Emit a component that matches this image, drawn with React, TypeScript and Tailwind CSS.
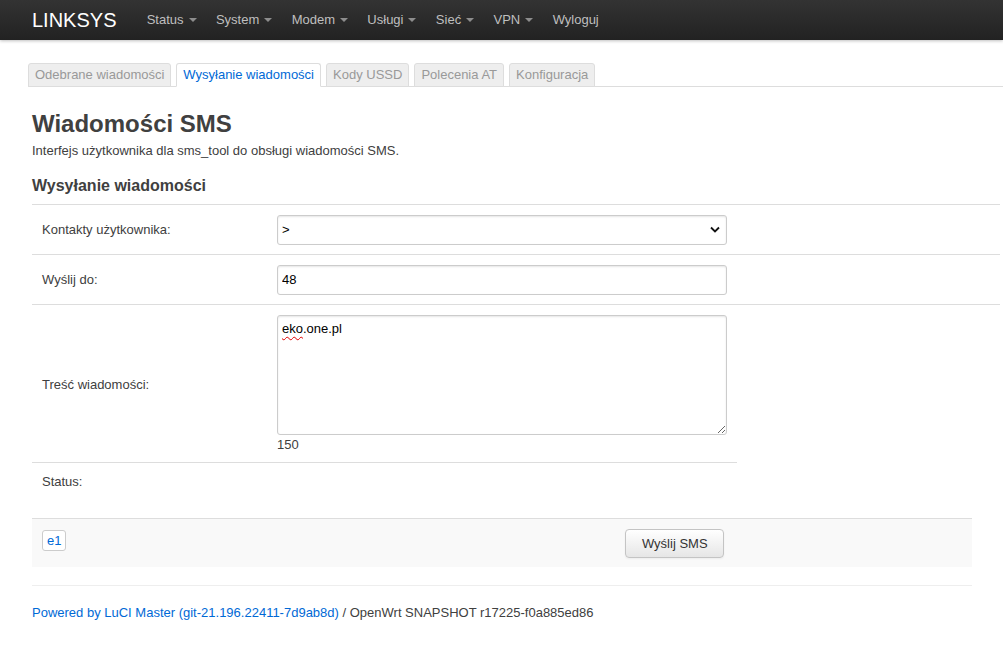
import { useState } from "react"

const menu = ["Status", "System", "Modem", "Usługi", "Sieć", "VPN"]
const tabs = ["Odebrane wiadomości", "Wysyłanie wiadomości", "Kody USSD", "Polecenia AT", "Konfiguracja"]

function Caret() {
  return (
    <span className="ml-[5px] inline-block h-0 w-0 border-x-[4px] border-t-[4px] border-x-transparent border-t-[#8d8d8d] align-middle" />
  )
}

export default function App() {
  const [number, setNumber] = useState("48")
  const [message, setMessage] = useState("eko.one.pl")

  return (
    <div className="min-h-[650px] bg-white text-[13px] leading-[18px] text-[#404040]" style={{ fontFamily: '"Liberation Sans", Arial, sans-serif' }}>
      {/* Top bar */}
      <div className="flex h-10 items-center bg-gradient-to-b from-[#333333] to-[#222222] px-8 shadow-[0_1px_3px_rgba(0,0,0,0.25)]">
        <span className="text-[20px] leading-10 text-white">LINKSYS</span>
        <nav className="ml-[20.5px] flex items-center">
          {menu.map((m) => (
            <a key={m} className="flex items-center px-[9.7px] leading-10 text-[#bfbfbf]">
              {m}
              <Caret />
            </a>
          ))}
          <a className="px-[9.7px] leading-10 text-[#bfbfbf]">Wyloguj</a>
        </nav>
      </div>

      <div className="pl-8">
        {/* Tabs */}
        <ul className="-ml-1 mt-[23px] flex gap-[5px] border-b border-[#dddddd]">
          {tabs.map((t, i) => (
            <li
              key={t}
              className={`-mb-px rounded-t-[3px] border px-[6px] leading-[22px] ${
                i === 1
                  ? "border-[#dddddd] border-b-white bg-white text-[#0069d6]"
                  : "border-[#dddddd] bg-[#eeeeee] text-[#999999]"
              }`}
            >
              {t}
            </li>
          ))}
        </ul>

        <div className="pr-[3px]">
          <h2 className="mt-[19px] text-[24px] font-bold leading-9 text-[#404040]">Wiadomości SMS</h2>
          <p className="leading-[18px]">Interfejs użytkownika dla sms_tool do obsługi wiadomości SMS.</p>

          <h3 className="mt-[14px] border-b border-[#dddddd] pb-[6px] text-[16px] font-bold leading-6">
            Wysyłanie wiadomości
          </h3>

          {/* Contacts */}
          <div className="flex h-[50px] items-center border-b border-[#dddddd]">
            <label className="w-[245px] pl-[10px]">Kontakty użytkownika:</label>
            <div className="relative">
              <select className="h-[30px] w-[450px] appearance-none rounded-[3px] border border-[#cccccc] bg-white pl-[4px] text-[13px] text-black shadow-[inset_0_1px_2px_rgba(0,0,0,0.1)] outline-none">
                <option>&gt;</option>
              </select>
              <svg className="pointer-events-none absolute right-[7px] top-[11px]" width="10" height="7" viewBox="0 0 10 7">
                <path d="M1 1.5 L5 5.5 L9 1.5" fill="none" stroke="#111" strokeWidth="1.8" />
              </svg>
            </div>
          </div>

          {/* Send to */}
          <div className="flex h-[50px] items-center border-b border-[#dddddd]">
            <label className="w-[245px] pl-[10px]">Wyślij do:</label>
            <input
              value={number}
              onChange={(e) => setNumber(e.target.value)}
              className="h-[30px] w-[450px] rounded-[3px] border border-[#cccccc] px-[4px] text-[13px] text-black shadow-[inset_0_1px_2px_rgba(0,0,0,0.1)] outline-none"
            />
          </div>

          {/* Message */}
          <div className="flex w-[705px] items-center border-b border-[#dddddd] pb-[8px] pt-[10px]">
            <label className="w-[245px] pl-[10px]">Treść wiadomości:</label>
            <div>
              <div className="relative">
                <textarea
                  value={message}
                  onChange={(e) => setMessage(e.target.value)}
                  spellCheck={false}
                  className="block h-[120px] w-[450px] resize rounded-[3px] border border-[#cccccc] px-[4px] py-[4px] text-[13px] leading-[18px] text-black shadow-[inset_0_1px_2px_rgba(0,0,0,0.1)] outline-none"
                />
                <span className="pointer-events-none absolute left-[5px] top-[5px] text-[13px] leading-[18px] text-transparent underline decoration-[#e00000] decoration-wavy decoration-1 underline-offset-[3px]">
                  eko
                </span>
              </div>
              <div className="mt-[1px] leading-[18px]">150</div>
            </div>
          </div>

          {/* Status */}
          <div className="flex h-[38px] items-center">
            <label className="w-[245px] pl-[10px]">Status:</label>
          </div>

          {/* Actions */}
          <div className="mr-[28px] mt-[17px] flex h-[49px] items-start border-t border-[#dddddd] bg-[#f9f9f9] pl-[10px] pt-[11px]">
            <button className="rounded-[3px] border border-[#cccccc] bg-white px-[4px] text-[13px] leading-[19px] text-[#0069d6]">
              e1
            </button>
            <button className="ml-[559px] -mt-px h-[29px] rounded-[4px] border border-[#c4c4c4] bg-gradient-to-b from-white to-[#e6e6e6] px-[15.5px] text-[13px] text-[#333333] shadow-[0_1px_2px_rgba(0,0,0,0.05)]">
              Wyślij SMS
            </button>
          </div>

          <div className="mr-[28px] mt-[18px] border-t border-[#eeeeee]" />

          <footer className="mt-[18px] leading-[18px]">
            <a className="text-[#0069d6]">Powered by LuCI Master (git-21.196.22411-7d9ab8d)</a>
            <span> / OpenWrt SNAPSHOT r17225-f0a885ed86</span>
          </footer>
        </div>
      </div>
    </div>
  )
}
